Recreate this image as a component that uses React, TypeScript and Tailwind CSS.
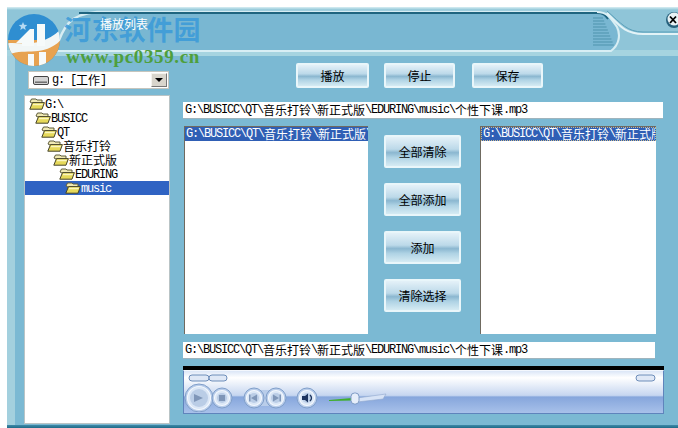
import React from "react";

const cjk = "font-['Noto_Sans_CJK_SC','Noto_Sans_CJK_JP',sans-serif]";

function T({ s }: { s: string }) {
  const runs = s.match(/[\x00-\x7f]+|[^\x00-\x7f]+/g) ?? [];
  return (
    <>
      {runs.map((r, i) =>
        /^[\x00-\x7f]/.test(r) ? (
          <span key={i} className="font-['Liberation_Mono',monospace] tracking-[-1.2px] whitespace-pre">
            {r}
          </span>
        ) : (
          <span key={i} className={cjk}>
            {r}
          </span>
        )
      )}
    </>
  );
}

function Folder() {
  return (
    <svg width="16" height="12" viewBox="0 0 16 12" className="shrink-0">
      <path d="M1 4 L2.5 1 H7 L8 2 H13 V5 H3 Z" fill="#efe9b4" stroke="#5f5c3c" strokeWidth="1" />
      <path d="M0.8 11.2 L3.5 4.6 H15.4 L13 11.2 Z" fill="#e6d95a" stroke="#45432a" strokeWidth="1" />
      <path d="M4.2 5.8 H14 L13.5 7.2 H3.7 Z" fill="#faf6c0" />
    </svg>
  );
}

function Btn({ label, w, h }: { label: string; w: string; h: string }) {
  return (
    <div
      className={`${w} ${h} flex items-center justify-center rounded-[2px] border-2 border-[#e9f6fa] bg-[linear-gradient(#e4f1f8_0%,#bcd9e9_42%,#8bb7d0_54%,#aed2e4_70%,#d5ebf3_100%)] text-[12px] text-black ${cjk}`}
    >
      {label}
    </div>
  );
}

function Header() {
  return (
    <div className="relative h-[49px] shrink-0 overflow-visible">
      <svg width="671" height="49" viewBox="0 0 671 49" className="block">
        <defs>
          <linearGradient id="top" x1="0" y1="0" x2="0" y2="1">
            <stop offset="0" stopColor="#d9eef2" />
            <stop offset="1" stopColor="#8ec6d8" />
          </linearGradient>
        </defs>
        <rect width="671" height="49" fill="#8fc5d8" />
        <rect width="671" height="3" fill="url(#top)" />
        <rect y="43" width="671" height="6" fill="#a6d4e0" />
        <path
          d="M48 44 C56 20 62 7 90 5 H590 C600 5 603 10 608 18 C612 28 612 38 604 43 H48 Z"
          fill="#79b7d2"
        />
        <path d="M48 44 C56 20 62 7 90 5 H590" fill="none" stroke="#d6edf3" strokeWidth="2.5" />
        <path d="M72 6 H590 C596 6 598 8 601 12" fill="none" stroke="#1f6580" strokeWidth="2" />
        <path d="M590 5 C600 5 603 10 610 20 C614 28 612 38 604 44 H48" fill="none" stroke="#d8eef4" strokeWidth="2" />
        {[11, 14, 17, 20, 23, 26, 29, 32, 35, 38].map((y, i) => (
          <line key={y} x1="586" x2={596 + i * 1.2} y1={y} y2={y} stroke="#4f93ad" strokeWidth="1" />
        ))}
        <path d="M600 6 C612 18 618 27 636 27 H671" fill="none" stroke="#e3f3f7" strokeWidth="2" />
        <path d="M600 4 C614 16 620 25 636 25 H671" fill="none" stroke="#5b9fb9" strokeWidth="1" />
        <circle cx="667" cy="13" r="8" fill="#27617c" />
        <circle cx="667" cy="12" r="6.5" fill="#e8f2f5" />
        <path d="M663 9.5 L669 16 M669 9.5 L663 16" stroke="#000" strokeWidth="1.8" />
      </svg>
    </div>
  );
}

function Logo() {
  return (
    <svg width="60" height="54" viewBox="0 0 60 54" className="absolute left-[4px] top-[14px]">
      <defs>
        <clipPath id="c">
          <circle cx="30" cy="26" r="26" />
        </clipPath>
      </defs>
      <g clipPath="url(#c)">
        <rect width="60" height="54" fill="#2f8ed1" />
        <rect y="26" width="60" height="28" fill="#e7a250" />
        <path d="M0 30 C14 26 36 38 60 12 L60 22 C44 44 22 34 6 40 L2 54 H0 Z" fill="#f1f6f6" />
        <path d="M12 29 L26 15 H30 V32 H18 V29 Z" fill="#f6fafa" />
        <path d="M33 10 H41 V32 H33 Z" fill="#f6fafa" />
        <rect x="24" y="40" width="6" height="14" fill="#f6fafa" />
        <rect x="35" y="38" width="7" height="16" fill="#f6fafa" />
      </g>
      <path d="M19 8 l1.2 2.8 3 .3 -2.2 1.9 .7 2.9 -2.7 -1.6 -2.7 1.6 .7 -2.9 -2.2 -1.9 3 -.3Z" fill="#b5d9f2" />
    </svg>
  );
}

function Player() {
  const ring = (cx: number, r: number) => (
    <g key={cx}>
      <circle cx={cx} cy="28" r={r} fill="#b9cdea" stroke="#7f9ec9" strokeWidth="1" />
      <circle cx={cx} cy="28" r={r - 2.5} fill="#dbe7f6" stroke="#f4f8fd" strokeWidth="1.2" />
      <circle cx={cx} cy="28" r={r - 5} fill="#a9bfdd" opacity="0.65" />
    </g>
  );
  const pill = (x: number, w: number) => (
    <rect key={x} x={x} y="5" width={w} height="6" rx="3" fill="#dfe8f6" stroke="#6d8db9" strokeWidth="1" />
  );
  return (
    <div className="flex h-[48px] w-[481px] flex-col">
      <div className="h-[4px] bg-black" />
      <div className="flex-1 border border-[#5f84bc] border-t-[#f3f7fd] bg-[linear-gradient(#dbe6f7_0%,#ffffff_16%,#c6d6f0_58%,#86a6dc_62%,#a8c1ea_100%)]">
        <svg width="479" height="42" viewBox="0 0 479 42" className="-mt-px block blur-[0.4px]">
          {pill(5, 20)}
          {pill(25, 18)}
          {pill(452, 19)}
          <path d="M30 22 C34 18 42 18 46 22 V34 C42 38 34 38 30 34Z" fill="#b9cdea" />
          {ring(15, 14)}
          {ring(38, 10)}
          <rect x="70" y="20" width="22" height="16" fill="#b9cdea" />
          {ring(70, 10)}
          {ring(92, 10)}
          {ring(123, 10)}
          <path d="M10 24 L19 28 L10 32Z" fill="#7f96b8" />
          <rect x="35" y="25" width="6" height="6" fill="#7f96b8" />
          <path d="M67 28 L73 24.5 V31.5Z M65 24.5 H66.5 V31.5 H65Z" fill="#7f96b8" />
          <path d="M95 28 L89 24.5 V31.5Z M95.5 24.5 H97 V31.5 H95.5Z" fill="#7f96b8" />
          <path d="M118 26 H121 L124 23.5 V32.5 L121 30 H118Z" fill="#1e3560" />
          <path d="M126 25 C128 27 128 29 126 31" fill="none" stroke="#1e3560" strokeWidth="1.3" />
          <path d="M173 28 L202 24 L199 29 L173 32Z" fill="#d7e3f6" stroke="#90a8cc" strokeWidth="0.6" />
          <path d="M145 30 L168 28 V30.5 L145 31Z" fill="#3fae2c" />
          <rect x="167" y="23" width="8" height="11" rx="3.5" fill="#e6eefa" stroke="#7e9bc4" strokeWidth="1" />
        </svg>
      </div>
    </div>
  );
}

export default function App() {
  const tree = ["G:\\", "BUSICC", "QT", "音乐打铃", "新正式版", "EDURING", "music"];
  const indents = ["pl-[4px]", "pl-[10px]", "pl-[16px]", "pl-[22px]", "pl-[28px]", "pl-[34px]", "pl-[40px]"];
  const path = "G:\\BUSICC\\QT\\音乐打铃\\新正式版\\EDURING\\music\\个性下课.mp3";
  return (
    <div className="relative flex h-[428px] w-[678px] flex-col overflow-hidden bg-white pl-[7px] pt-[7px]">
      <div className="flex flex-1 flex-col bg-[#7bb9d3]">
        <Header />
        <div className="flex flex-1">
          <div className="w-[8px] shrink-0 bg-[#a3d0de]" />
          <div className="ml-[9px] flex w-[146px] shrink-0 flex-col">
            <div className="ml-[4px] mt-[15px] flex h-[18px] w-[141px] items-center border border-[#c5c5bd] bg-white pr-px text-[12px] leading-none text-black">
              <svg width="16" height="11" viewBox="0 0 16 11" className="ml-[4px] mr-[3px] shrink-0">
                <rect x="0.5" y="1.5" width="15" height="8" rx="1.5" fill="#d4d4d4" stroke="#444" />
                <rect x="2" y="6.5" width="12" height="1.4" fill="#666" />
              </svg>
              <T s="g: " />
              <T s="[" />
              <span className={cjk}>工作</span>
              <T s="]" />
              <div className="ml-auto flex h-[14px] w-[16px] items-center justify-center border border-[#f4f3ee] border-b-[#777] border-r-[#777] bg-[#d8d5cc]">
                <div className="h-0 w-0 border-x-[4px] border-t-[4px] border-x-transparent border-t-black" />
              </div>
            </div>
            <div className="mt-[6px] h-[329px] border border-[#b9c4c6] bg-white pt-px text-[12px] text-black">
              {tree.map((t, i) => (
                <div
                  key={t}
                  className={`flex h-[14px] items-center leading-none ${indents[i]} ${
                    i === 6 ? "bg-[#2f63c3] text-white" : ""
                  }`}
                >
                  <Folder />
                  <span>
                    <T s={t} />
                  </span>
                </div>
              ))}
            </div>
          </div>
          <div className="ml-[13px] flex flex-col">
            <div className="ml-[113px] mt-[7px] flex">
              <Btn label="播放" w="w-[73px]" h="h-[25px]" />
              <div className="ml-[15px]">
                <Btn label="停止" w="w-[71px]" h="h-[25px]" />
              </div>
              <div className="ml-[17px]">
                <Btn label="保存" w="w-[71px]" h="h-[25px]" />
              </div>
            </div>
            <div className="mt-[14px] flex h-[17px] w-[480px] items-center whitespace-nowrap border-b border-[#9fb4bd] bg-white pl-[2px] text-[12px] leading-none text-black">
              <T s={path} />
            </div>
            <div className="mt-[7px] flex h-[208px]">
              <div className="ml-px h-full w-[184px] overflow-hidden border-l border-t border-[#6f6a60] bg-white text-[12px] leading-none">
                <div className="flex h-[14px] items-center overflow-hidden whitespace-nowrap bg-[#2f5fb5] pl-px text-white">
                  <T s={path} />
                </div>
              </div>
              <div className="ml-[16px] flex flex-col gap-[15px] pt-[9px]">
                <Btn label="全部清除" w="w-[77px]" h="h-[33px]" />
                <Btn label="全部添加" w="w-[77px]" h="h-[33px]" />
                <Btn label="添加" w="w-[77px]" h="h-[33px]" />
                <Btn label="清除选择" w="w-[77px]" h="h-[33px]" />
              </div>
              <div className="ml-[19px] h-full w-[176px] overflow-hidden border-l border-t border-[#6f6a60] bg-white text-[12px] leading-none">
                <div className="flex h-[14px] items-center overflow-hidden whitespace-nowrap border border-dotted border-[#c9b98f] bg-[#2f5fb5] pl-px text-white">
                  <T s={path} />
                </div>
              </div>
            </div>
            <div className="mt-[8px] flex h-[17px] w-[472px] items-center whitespace-nowrap border-b border-[#9fb4bd] bg-white pl-[2px] text-[12px] leading-none text-black">
              <T s={path} />
            </div>
            <div className="mt-[7px]">
              <Player />
            </div>
          </div>
        </div>
        <div className="h-[3px] shrink-0 bg-[linear-gradient(#3f8aa8,#1f6a88)]" />
      </div>
      <Logo />
      <div className={`absolute left-[64px] top-[11px] text-[27px] font-bold leading-[36px] tracking-[0.4px] text-[#3a9ad9]/85 ${cjk}`}>
        河东软件园
      </div>
      <span className={`absolute left-[100px] top-[17px] text-[12px] leading-[14px] text-white ${cjk}`}>播放列表</span>
      <div className="absolute left-[66px] top-[47px] font-['Liberation_Serif',serif] text-[19px] font-bold leading-[20px] tracking-[0.65px] text-[#4e9f3d]">
        www.pc0359.cn
      </div>
    </div>
  );
}
